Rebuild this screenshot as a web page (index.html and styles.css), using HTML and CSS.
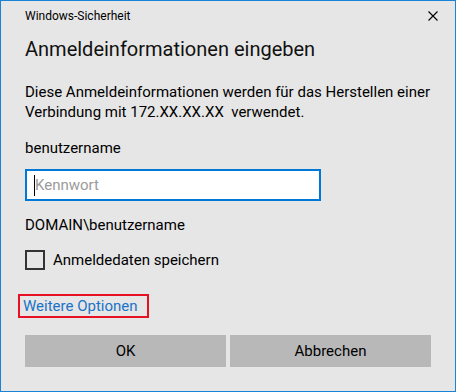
FILE: index.html
```html
<!DOCTYPE html>
<html lang="de">
<head>
    <meta charset="UTF-8">
    <meta name="viewport" content="width=device-width, initial-scale=1.0">
    <title>Windows-Sicherheit</title>
    <link rel="stylesheet" href="styles.css">
</head>
<body>

    <div class="dialog">
        <div class="titlebar">
            <span class="caption">Windows-Sicherheit</span>
            <svg class="close" width="10" height="10" viewBox="0 0 10 10">
                <path d="M0.5 0.5 L9.5 9.5 M9.5 0.5 L0.5 9.5" stroke="#000" stroke-width="1.1" fill="none"/>
            </svg>
        </div>

        <h1>Anmeldeinformationen eingeben</h1>

        <p class="info">Diese Anmeldeinformationen werden für das Herstellen einer Verbindung mit 172.XX.XX.XX&nbsp; verwendet.</p>

        <p class="user">benutzername</p>

        <div class="field">
            <span class="caret"></span>
            <span class="placeholder">Kennwort</span>
        </div>

        <p class="domain">DOMAIN\benutzername</p>

        <label class="remember">
            <span class="box"></span>
            <span>Anmeldedaten speichern</span>
        </label>

        <div class="more">
            <a href="#" class="options">Weitere Optionen</a>
        </div>

        <div class="buttons">
            <button>OK</button>
            <button>Abbrechen</button>
        </div>
    </div>

</body>
</html>
```

FILE: styles.css
```css
* { margin: 0; padding: 0; box-sizing: border-box; font-family: Roboto, "Liberation Sans", sans-serif; }
body { background: #e6e6e6; }
.dialog { width: 456px; height: 392px; border: 1px solid #1883d7; background: #e6e6e6; padding: 7px 24px 24px; color: #000; font-size: 15px; line-height: 20px; }
.titlebar { display: flex; justify-content: space-between; align-items: flex-start; height: 16px; }
.caption { font-size: 12px; line-height: 16px; color: #000; }
.close { margin-top: 3px; margin-right: -7px; }
h1 { font-size: 20px; font-weight: normal; line-height: 28px; margin-top: 11px; color: #111; }
.info { margin-top: 19px; }
.user { margin-top: 16px; }
.field { display: flex; align-items: center; margin-top: 11px; width: 296px; height: 32px; border: 2px solid #0078d7; background: #fff; padding-left: 7px; }
.caret { width: 1px; height: 21px; background: #000; }
.placeholder { color: #9b9b9b; margin-left: 0; }
.domain { margin-top: 14px; }
.remember { display: flex; align-items: center; gap: 8px; margin-top: 15px; height: 20px; }
.box { width: 20px; height: 20px; border: 2px solid #333; }
.more { margin-top: 24px; height: 24px; }
.options { display: inline-block; margin-left: -7px; padding: 0 9px 0 3px; border: 2px solid #e81123; color: #1a73c8; text-decoration: none; line-height: 20px; }
.buttons { display: flex; gap: 4px; margin-top: 17px; }
.buttons button { flex: 1; height: 32px; border: none; background: #b8b8b8; color: #000; font-size: 15px; }
```
